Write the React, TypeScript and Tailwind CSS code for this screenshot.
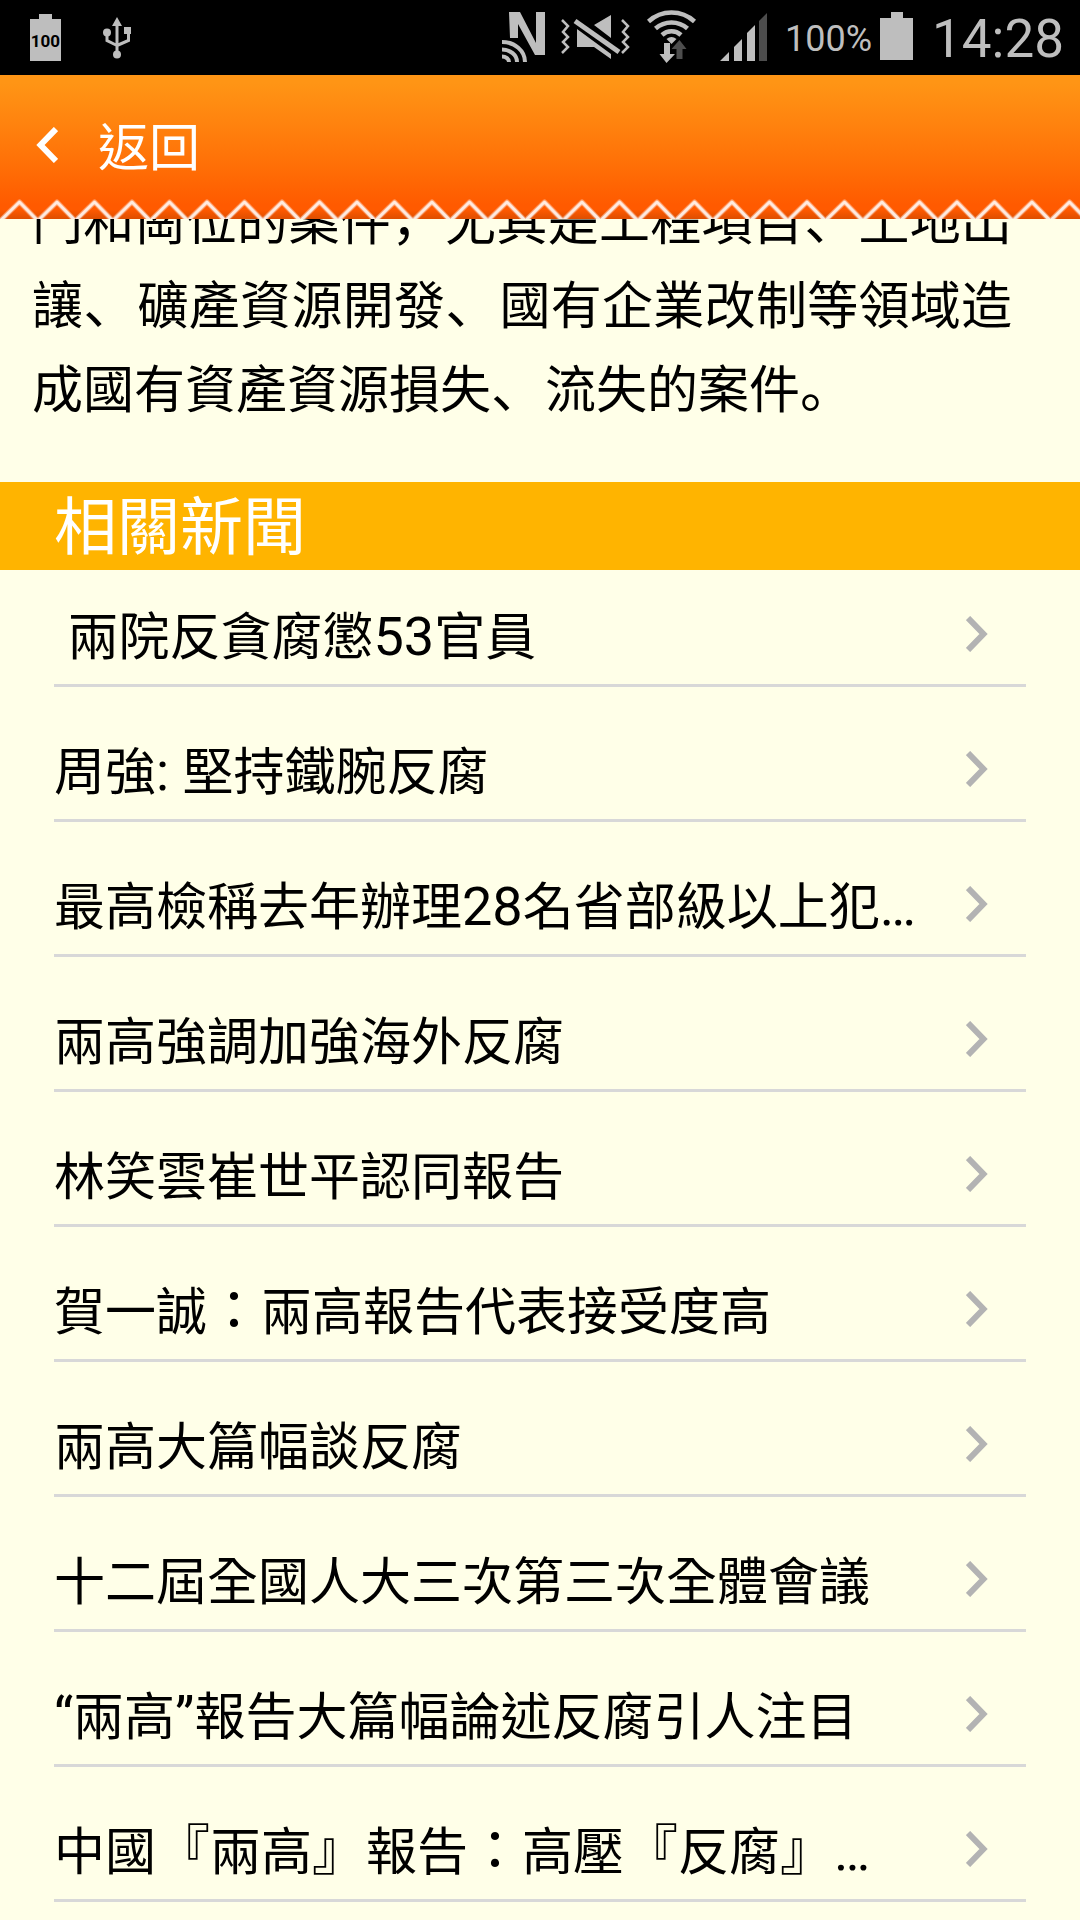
const RELATED_NEWS = [
  '\u00a0兩院反貪腐懲53官員',
  '周強: 堅持鐵腕反腐',
  '最高檢稱去年辦理28名省部級以上犯…',
  '兩高強調加強海外反腐',
  '林笑雲崔世平認同報告',
  '賀一誠：兩高報告代表接受度高',
  '兩高大篇幅談反腐',
  '十二屆全國人大三次第三次全體會議',
  '“兩高”報告大篇幅論述反腐引人注目',
  '中國『兩高』報告：高壓『反腐』…',
];

const ARTICLE_TEXT =
  '門和崗位的案件，尤其是工程項目、土地出讓、礦產資源開發、國有企業改制等領域造成國有資產資源損失、流失的案件。';

// Digits, Latin and punctuation are set a little larger than the Han characters
function MixedText({ text }: { text: string }) {
  return text.split(/([^\u4e00-\u9fff]+)/).map((part, i) =>
    i % 2 ? (
      <span key={i} className="text-[54px] leading-none">
        {part}
      </span>
    ) : (
      part
    ),
  );
}

function StatusBar() {
  return (
    <div className="flex h-[75px] items-center justify-between bg-black pl-[30px] pr-4 text-[#bebebe]">
      {/* Left icons */}
      <div className="flex items-center gap-[42px]">
        <svg className="h-[75px] w-[31px]" viewBox="0 0 31 75" fill="currentColor" aria-label="電量 100">
          <path d="M9 14h13v5h9v42H0V19h9z" />
          <text x="15.5" y="47" fill="#000" fontSize="17" fontWeight="700" textAnchor="middle" className="font-[Roboto,sans-serif]">100</text>
        </svg>
        <svg className="h-[75px] w-7" viewBox="0 0 28 75" fill="none" stroke="currentColor" strokeWidth="3" aria-label="USB">
          <path d="M14 24v30M4 32v8.500l10 5M25.500 32v8.500l-11.500 5" />
          <g fill="currentColor" stroke="none">
            <path d="M14 17l5 9H9zM21 27h7v7h-7z" />
            <circle cx="4" cy="32.500" r="4" />
            <circle cx="14" cy="54.500" r="4" />
          </g>
        </svg>
      </div>

      {/* Right icons */}
      <div className="flex items-center">
        <svg className="h-[75px] w-[43px]" viewBox="0 0 43 75" fill="currentColor" aria-label="NFC">
          <path d="M7 12h11l16 31V12h9v43H33L16 24v14H8z" />
          <g fill="none" stroke="currentColor" strokeWidth="4">
            <path d="M0 42a23 20 0 0 1 23 20M0 49.500a15 12.500 0 0 1 15 12.500M0 56.500a7 5.500 0 0 1 7 5.500" />
          </g>
        </svg>
        <svg className="ml-4 h-[75px] w-[70px]" viewBox="0 0 70 75" fill="currentColor" aria-label="震動">
          <path d="M50 15v23L33 25zM16 29l34 25v5L33 47H16z" />
          <path d="M14.500 21L57 51" stroke="#000" strokeWidth="10" />
          <path d="M14 21L58 52" stroke="currentColor" strokeWidth="5" />
          <path d="M2 20l6 6-5 6 5 5-5 5 5 5-6 6M62 20l6 6-5 6 5 5-5 5 5 5-6 6" transform="translate(-1)" fill="none" stroke="currentColor" strokeWidth="2.500" />
        </svg>
        <svg className="ml-4 h-[75px] w-[50px]" viewBox="0 0 50 75" fill="none" aria-label="Wi-Fi">
          <g stroke="currentColor" strokeWidth="4.500">
            <path d="M1.500 21.500a34 34 0 0 1 46 0M8.500 28.500a24 24 0 0 1 32 0M15 35a14 14 0 0 1 19 0" />
          </g>
          <path d="M19.500 39a8 8 0 0 1 10 0l-5 5z" fill="currentColor" />
          <path d="M17 43h6v11h5l-8.500 9-7-9H17z" fill="currentColor" />
          <path d="M32.500 40l7 9h-4v10h-6V49h-5z" fill="#4d4d4d" />
        </svg>
        <svg className="ml-[23px] h-[75px] w-[47px]" viewBox="0 0 47 75" fill="currentColor" aria-label="訊號">
          <path d="M0 61l9-9v9zM14 47l8-8v22h-8zM27 33l8-8v36h-8z" />
          <path d="M39 21l8-8v48h-8z" fill="#4d4d4d" />
        </svg>
        <span className="ml-[18px] pt-1 text-[36px] leading-[71px]">100%</span>
        <svg className="ml-2 h-[75px] w-[33px]" viewBox="0 0 33 75" fill="currentColor" aria-label="電池">
          <path d="M11 12h12v6h10v42H0V18h11z" />
        </svg>
        <span className="ml-[19px] pt-1 text-[53px] leading-[71px]">14:28</span>
      </div>
    </div>
  );
}

function Header() {
  return (
    <header className="relative flex h-36 items-center bg-linear-to-b from-[#ff9515] from-5% to-[#ff5a00] to-90%">
      <button type="button" className="flex items-center gap-10 pl-9 text-[51px] text-white">
        <svg className="mb-1 h-9 w-[22px]" viewBox="0 0 22 36" fill="none" stroke="currentColor" strokeWidth="6">
          <path d="M20 2L4.500 18 20 34" />
        </svg>
        <span className="pt-1 leading-[72px]">返回</span>
      </button>

      {/* Zigzag edge */}
      <svg className="absolute inset-x-0 bottom-0 h-6 w-full" aria-hidden="true">
        <defs>
          <linearGradient id="shade" x1="0" y1="0" x2="0" y2="1">
            <stop offset="0.6" stopColor="#c84600" stopOpacity="0" />
            <stop offset="1" stopColor="#c84600" stopOpacity="0.6" />
          </linearGradient>
          <pattern id="zigzag" width="37.500" height="24" patternUnits="userSpaceOnUse">
            <path d="M0 26L19.500 7 38 26" fill="none" stroke="#fff" strokeOpacity="0.4" strokeWidth="5" strokeLinejoin="round" />
            <path d="M0 26L19.500 7 38 26" fill="none" stroke="#fff" strokeOpacity="0.8" strokeWidth="3" strokeLinejoin="round" />
          </pattern>
        </defs>
        <rect width="100%" height="24" fill="url(#shade)" />
        <rect width="100%" height="24" fill="url(#zigzag)" />
      </svg>
    </header>
  );
}

export default function App() {
  return (
    <div className="min-h-screen bg-[#ffffe8] font-[Roboto,'Noto_Sans_CJK_TC',sans-serif] text-black">
      <StatusBar />
      <Header />

      <main>
        {/* Article, scrolled under the header */}
        <article className="overflow-hidden pb-[54px] pl-8 pr-[68px]">
          <p className="-mt-[43px] text-justify font-['Noto_Sans_CJK_SC',sans-serif] text-[51px] leading-[84px]">
            <MixedText text={ARTICLE_TEXT} />
          </p>
        </article>

        {/* Related news */}
        <section>
          <h2 className="bg-[#ffb400] px-[54px] pt-1 text-[63px] leading-[84px] text-white">相關新聞</h2>
          <ul className="px-[54px]">
            {RELATED_NEWS.map((title) => (
              <li key={title} className="border-b-3 border-[#d8d8d8]">
                <a href="#" className="flex items-center justify-between pb-3 pr-[38px] pt-12 [li:first-child>&]:pt-[30px]">
                  <span className="truncate pt-1 text-[51px] leading-[68px]">
                    <MixedText text={title} />
                  </span>
                  <svg className="mb-1 h-9 w-[22px] shrink-0" viewBox="0 0 22 36" fill="none" stroke="#b3b3b3" strokeWidth="6">
                    <path d="M2 2l15.500 16L2 34" />
                  </svg>
                </a>
              </li>
            ))}
          </ul>
        </section>
      </main>
    </div>
  );
}
